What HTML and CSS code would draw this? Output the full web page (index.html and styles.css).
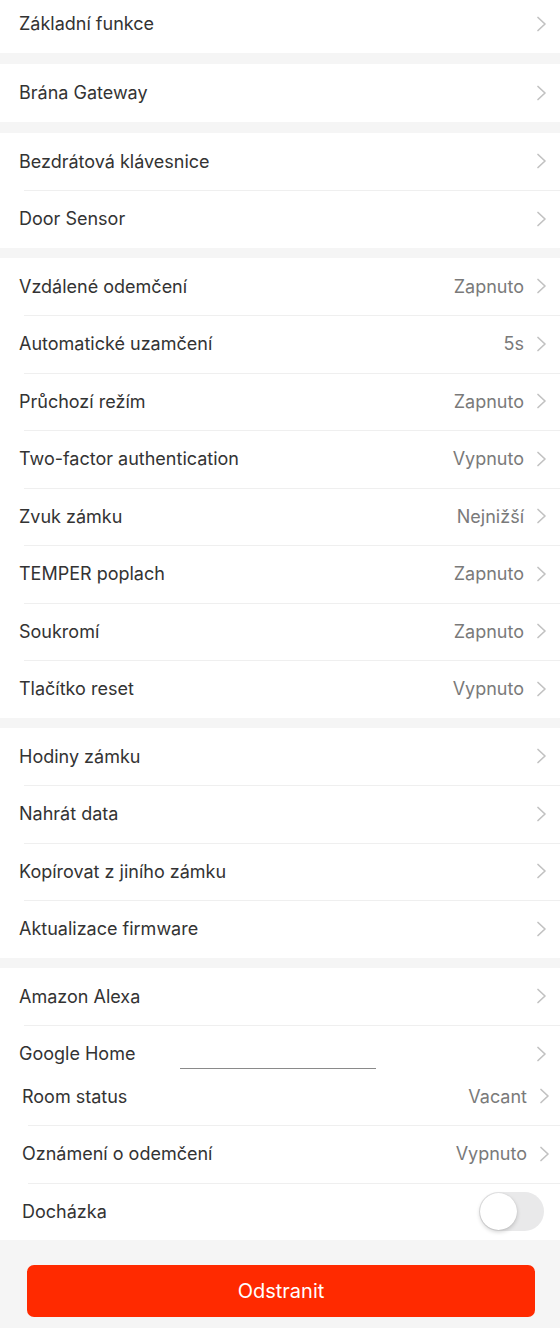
FILE: index.html
```html
<!DOCTYPE html>
<html lang="cs">
<head>
<meta charset="utf-8">
<link rel="stylesheet" href="styles.css">
</head>
<body>
<div class="page">
  <div class="group first">
    <div class="row"><span class="label">Základní funkce</span><svg class="chev" viewBox="0 0 11 16"><path d="M2 1.5 L9 8 L2 14.5"/></svg></div>
  </div>
  <div class="group second">
    <div class="row"><span class="label">Brána Gateway</span><svg class="chev" viewBox="0 0 11 16"><path d="M2 1.5 L9 8 L2 14.5"/></svg></div>
  </div>
  <div class="group">
    <div class="row"><span class="label">Bezdrátová klávesnice</span><svg class="chev" viewBox="0 0 11 16"><path d="M2 1.5 L9 8 L2 14.5"/></svg></div>
    <div class="row"><span class="label">Door Sensor</span><svg class="chev" viewBox="0 0 11 16"><path d="M2 1.5 L9 8 L2 14.5"/></svg></div>
  </div>
  <div class="group">
    <div class="row"><span class="label">Vzdálené odemčení</span><span class="value">Zapnuto</span><svg class="chev" viewBox="0 0 11 16"><path d="M2 1.5 L9 8 L2 14.5"/></svg></div>
    <div class="row"><span class="label">Automatické uzamčení</span><span class="value">5s</span><svg class="chev" viewBox="0 0 11 16"><path d="M2 1.5 L9 8 L2 14.5"/></svg></div>
    <div class="row"><span class="label">Průchozí režím</span><span class="value">Zapnuto</span><svg class="chev" viewBox="0 0 11 16"><path d="M2 1.5 L9 8 L2 14.5"/></svg></div>
    <div class="row"><span class="label">Two-factor authentication</span><span class="value">Vypnuto</span><svg class="chev" viewBox="0 0 11 16"><path d="M2 1.5 L9 8 L2 14.5"/></svg></div>
    <div class="row"><span class="label">Zvuk zámku</span><span class="value">Nejnižší</span><svg class="chev" viewBox="0 0 11 16"><path d="M2 1.5 L9 8 L2 14.5"/></svg></div>
    <div class="row"><span class="label">TEMPER poplach</span><span class="value">Zapnuto</span><svg class="chev" viewBox="0 0 11 16"><path d="M2 1.5 L9 8 L2 14.5"/></svg></div>
    <div class="row"><span class="label">Soukromí</span><span class="value">Zapnuto</span><svg class="chev" viewBox="0 0 11 16"><path d="M2 1.5 L9 8 L2 14.5"/></svg></div>
    <div class="row"><span class="label">Tlačítko reset</span><span class="value">Vypnuto</span><svg class="chev" viewBox="0 0 11 16"><path d="M2 1.5 L9 8 L2 14.5"/></svg></div>
  </div>
  <div class="group">
    <div class="row"><span class="label">Hodiny zámku</span><svg class="chev" viewBox="0 0 11 16"><path d="M2 1.5 L9 8 L2 14.5"/></svg></div>
    <div class="row"><span class="label">Nahrát data</span><svg class="chev" viewBox="0 0 11 16"><path d="M2 1.5 L9 8 L2 14.5"/></svg></div>
    <div class="row"><span class="label">Kopírovat z jiního zámku</span><svg class="chev" viewBox="0 0 11 16"><path d="M2 1.5 L9 8 L2 14.5"/></svg></div>
    <div class="row"><span class="label">Aktualizace firmware</span><svg class="chev" viewBox="0 0 11 16"><path d="M2 1.5 L9 8 L2 14.5"/></svg></div>
  </div>
  <div class="group">
    <div class="row"><span class="label">Amazon Alexa</span><svg class="chev" viewBox="0 0 11 16"><path d="M2 1.5 L9 8 L2 14.5"/></svg></div>
    <div class="row"><span class="label">Google Home</span><svg class="chev" viewBox="0 0 11 16"><path d="M2 1.5 L9 8 L2 14.5"/></svg></div>
  </div>
  <div class="group overlay-group">
    <div class="stray-line"></div>
    <div class="row alt"><span class="label">Room status</span><span class="value">Vacant</span><svg class="chev" viewBox="0 0 11 16"><path d="M2 1.5 L9 8 L2 14.5"/></svg></div>
    <div class="row alt"><span class="label">Oznámení o odemčení</span><span class="value">Vypnuto</span><svg class="chev" viewBox="0 0 11 16"><path d="M2 1.5 L9 8 L2 14.5"/></svg></div>
    <div class="row alt"><span class="label">Docházka</span><span class="toggle"><span class="knob"></span></span></div>
  </div>
  <div class="footer">
    <button class="delete">Odstranit</button>
  </div>
</div>
</body>
</html>
```
FILE: styles.css
```css
html, body {
  margin: 0;
  padding: 0;
  background: #f5f5f5;
}
body {
  font-family: Inter, "Noto Sans", "Liberation Sans", sans-serif;
  color: #333;
  width: 560px;
  height: 1328px;
  overflow: hidden;
}
.page {
  display: flex;
  flex-direction: column;
  gap: 10px;
  margin-top: -5px;
}
.group {
  background: #fff;
  display: flex;
  flex-direction: column;
}
.group.first {
  margin-bottom: 1.5px;
}
.group.second {
  margin-bottom: 1px;
}
.row {
  position: relative;
  height: 57.5px;
  display: flex;
  align-items: center;
  padding: 0 13px 0 19px;
  box-sizing: border-box;
  font-size: 18px;
}
.row + .row::before {
  content: "";
  position: absolute;
  top: 0;
  left: 24px;
  right: 0;
  height: 1px;
  background: #efefef;
}
.label {
  flex: 1;
  color: #333;
}
.value {
  color: #7a7a7a;
  margin-right: 12px;
}
.chev {
  width: 11px;
  height: 16px;
  flex: none;
}
.chev path {
  fill: none;
  stroke: #c2c2c2;
  stroke-width: 1.7;
  stroke-linecap: round;
  stroke-linejoin: round;
}
.overlay-group {
  position: relative;
  margin-top: -25px;
}
.row.alt {
  padding: 0 10px 0 22px;
}
.row.alt + .row.alt::before {
  left: 28px;
}
.stray-line {
  position: absolute;
  top: 0;
  left: 180px;
  width: 196px;
  height: 1px;
  background: #8a8a8a;
}
.toggle {
  width: 65px;
  height: 39px;
  border-radius: 20px;
  background: #e9e9ea;
  position: relative;
  margin-right: 6px;
  flex: none;
}
.knob {
  position: absolute;
  left: 1px;
  top: 1px;
  width: 37px;
  height: 37px;
  border-radius: 50%;
  background: #fff;
  box-shadow: 0 2px 4px rgba(0,0,0,0.18), 0 0 1px rgba(0,0,0,0.15);
}
.footer {
  padding: 25px 25px 20px 27px;
  margin-top: -10px;
}
.delete {
  display: block;
  width: 508px;
  height: 52px;
  border: none;
  border-radius: 7px;
  background: #ff2a00;
  color: #fff;
  font-family: Inter, "Noto Sans", "Liberation Sans", sans-serif;
  font-size: 20px;
  padding: 0;
}
```
